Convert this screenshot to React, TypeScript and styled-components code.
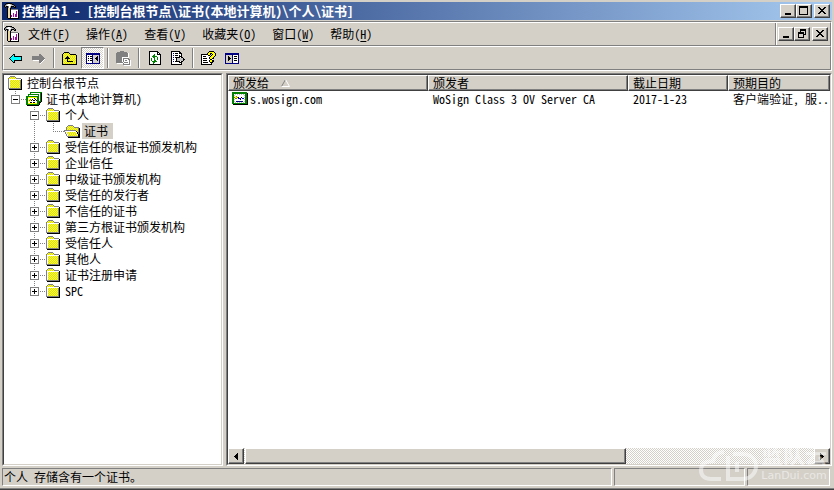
import React from "react";
import styled, { createGlobalStyle, css } from "styled-components";

const face = "#d4d0c8";
const shadow = "#808080";
const dark = "#404040";

const GlobalStyle = createGlobalStyle`
  * { box-sizing: border-box; }
  body { margin: 0; background: ${face}; }
  body, button, table {
    font-family: "Noto Sans CJK SC", "Liberation Sans", sans-serif;
    font-size: 12px;
    line-height: 16px;
    color: #000;
    font-feature-settings: "hwid";
  }
  button { margin: 0; padding: 0; border: 0; background: none; }
  svg { display: block; flex: none; }
`;

/* ---------- pixel icons ---------- */

const palette: Record<string, string> = {
  k: "#000000", w: "#ffffff", g: "#808080", l: "#c0c0c0", f: "#d4d0c8",
  y: "#ffff00", Y: "#ffff9c", d: "#d8d84c", o: "#808000", n: "#000080",
  b: "#0000ff", c: "#00ffff", e: "#008000", r: "#b000b0", t: "#e8d8a0",
};

function PixelIcon({ rows }: { rows: string[] }) {
  const width = Math.max(...rows.map((r) => r.length));
  const runs: React.ReactElement[] = [];
  rows.forEach((row, y) => {
    let x = 0;
    while (x < row.length) {
      const ch = row[x];
      let end = x + 1;
      while (end < row.length && row[end] === ch) end++;
      if (palette[ch]) {
        runs.push(<rect key={`${x}-${y}`} x={x} y={y} width={end - x} height={1} fill={palette[ch]} />);
      }
      x = end;
    }
  });
  return (
    <svg width={width} height={rows.length} viewBox={`0 0 ${width} ${rows.length}`} shapeRendering="crispEdges" aria-hidden="true">
      {runs}
    </svg>
  );
}

const folderRows = [
  "................",
  "...ggggg........",
  "..gydydyg.......",
  ".gydydydyggggg..",
  ".gwwwwwwwwwwwwk.",
  ".gwydydydydydgk.",
  ".gwdydydydydygk.",
  ".gwydydydydydgk.",
  ".gwdydydydydygk.",
  ".gwydydydydydgk.",
  ".gwdydydydydygk.",
  ".gwydydydydydgk.",
  ".gwdydydydydygk.",
  ".gggggggggggggk.",
  "..kkkkkkkkkkkkk.",
  "................",
];

const openFolderRows = [
  "................",
  "................",
  "....ggggg.......",
  "...gydydyg......",
  "..gydydydyggggg.",
  "..gdydydydydydgk",
  "..gydydydydydygk",
  "ggggggggggggydgk",
  "gwwwwwwwwwwwkygk",
  ".gwydydydydywkgk",
  ".gwdydydydydykgk",
  "..gwydydydydywkk",
  "..gwdydydydydykk",
  "...gggggggggggkk",
  "....kkkkkkkkkkkk",
  "................",
];

const certRows = [
  "................",
  "eeeeeeeeeeeeeee.",
  "eeeeeeeeeeeeeeek",
  "eewlwlwlwlwlweek",
  "eelwwwwwwwwwleek",
  "eewyowwwwwwwweek",
  "eeoyyokwwkwwleek",
  "eewoownbnwnbweek",
  "eelwwwwwnwwwleek",
  "eewwwwwwwwwwweek",
  "eelwnnnnnnnwleek",
  "eewlwlwlwlwlweek",
  "eeeeeeeeeeeeeeek",
  ".kkkkkkkkkkkkkkk",
  "................",
  "................",
];

const certStoreRows = [
  "................",
  "....eeeeeeeeeeee",
  "....ewwwwwwwwwek",
  "..eeeeeeeeeeewek",
  "..ewwwwwwwwwewek",
  "eeeeeeeeeeeeewek",
  "eeyyyyyyyyyeewek",
  "eeYwwwwwkwYeewek",
  "eewyowkwwkweewek",
  "eeyoykwkkwkeewek",
  "eewywwwwwwweeeek",
  "eeYwkkwkkwYeekk.",
  "eeyyyyyyyyyeek..",
  "eeeeeeeeeeeeek..",
  ".kkkkkkkkkkkk...",
  "................",
];

const consoleRows = [
  "..kkkkkk........",
  ".kglwwlgkk......",
  "kglwwwwllgk.....",
  "kgkkgwlkkkgk....",
  ".k.kgwgk..kk....",
  "...kttk.........",
  "...kttkggggggg..",
  "...kttkwwwwwwwk.",
  "...kttkwwwwwrwk.",
  "...kttkwwwwwrwk.",
  "...kttkwwrwwrwk.",
  "...kttkwwrwrrwk.",
  "...kttkrwrwrrwk.",
  "...kttkrwrwrrwk.",
  "...kttkwwwwwwwk.",
  "....kkkkkkkkkkk.",
];

const backRows = [
  "....kk.......",
  "...kck.......",
  "..kcckkkkkkkk",
  ".kcccccccccck",
  "kccccccccccck",
  ".kcccccccccck",
  "..kcckkkkkkkk",
  "...kck.......",
  "....kk.......",
];

const forwardRows = [
  "..............",
  ".......gg.....",
  ".......ggg....",
  "ggggggggggg...",
  "gggggggggggg..",
  "ggggggggggggg.",
  "ggggggggggggw.",
  ".wwwwwwggggw..",
  ".......gggw...",
  ".......ggw....",
  "........w.....",
];

const upRows = [
  "..kkkkk........",
  ".kydydyk.......",
  "kydydydykkkkkk.",
  "kdydydydydydydk",
  "kydydkdydydydyk",
  "kdydkkkydydydyk",
  "kydkkkkkydydydk",
  "kdydykdydydydyk",
  "kydydkydydydydk",
  "kdydykkkkkkydyk",
  "kydydydydydydyk",
  "kdydydydydydydk",
  "kkkkkkkkkkkkkkk",
];

const treePaneRows = [
  "nnnnnnnnnnnnnn",
  "nnnnnnnnnnnnnn",
  "nwwwwwnffffffn",
  "nwkwkknffffkfn",
  "nwwwwwnfffkkfn",
  "nwkwkknffkkkfn",
  "nwwwwwnfffkkfn",
  "nwkwkknffffkfn",
  "nwwwwwnffffffn",
  "nwwwwwnffffffn",
  "nnnnnnnnnnnnnn",
];

const actionPaneRows = [
  "nnnnnnnnnnnnnn",
  "nnnnnnnnnnnnnn",
  "nffffffnwwwwwn",
  "nffkfffnwkkkwn",
  "nffkkffnwwwwwn",
  "nffkkkfnwkkkwn",
  "nffkkffnwwwwwn",
  "nffkfffnwkkkwn",
  "nffffffnwwwwwn",
  "nffffffnwwwwwn",
  "nnnnnnnnnnnnnn",
];

const pasteRows = [
  "....gggg........",
  ".gggggggggg.....",
  "ggggggggggggw...",
  "ggggggggggggw...",
  "ggggggggggggw...",
  "ggggggggggggw...",
  "ggggggwwwwwww...",
  "ggggggwgggggg...",
  "ggggggwgwwwwgg..",
  "ggggggwgwggwwgw.",
  "ggggggwgwwwwwgw.",
  "gggggggwggggwgw.",
  ".wwwwwwgwwwwwgw.",
  ".......gggggggw.",
  "........wwwwwww.",
];

const refreshRows = [
  "kkkkkkkkk...",
  "kwwwwwwwkk..",
  "kwwwwwwwkwk.",
  "kwwwwewwkkkk",
  "kwwweewwwwwk",
  "kwweeeeewwwk",
  "kwwweewwewwk",
  "kwewwewwewwk",
  "kwewwewwewwk",
  "kwewweewwwwk",
  "kwweeeeewwwk",
  "kwwweewwwwwk",
  "kwwwewwwwwwk",
  "kkkkkkkkkkkk",
];

const exportRows = [
  "kkkkkkkkk.....",
  "kwwwwwwwkk....",
  "kwnwkkkwkkk...",
  "kwwwwwwwwwk...",
  "kwnwkkkwkwk...",
  "kwwwwwwwkkk...",
  "kwnwkkkkkwkk..",
  "kwwwwkllllllk.",
  "kwnwwkllllllkk",
  "kwwwwkllllllk.",
  "kwnwkkkkkwkk..",
  "kwwwwwwwkkk...",
  "kwwwwwwwwwk...",
  "kkkkkkkkkkk...",
];

const helpRows = [
  "........kkkkk..",
  ".......kyyyyyk.",
  "......kyykkyyyk",
  "kkkkkkkyyk.kyyk",
  "kwwwwwwkk.kyyyk",
  "kwkkkwwwwkyyyk.",
  "kwwwwwwwkyyyk..",
  "kwkkkkwwkyykk..",
  "kwwwwwwwwkkw...",
  "kwkkkkwwkyykk..",
  "kwwwwwwwkyykk..",
  "kwkkkkkwwkkk...",
  "kwwwwwwwwwk....",
  "kkkkkkkkkkk....",
];

const minimizeRows = ["......", "......", "......", "......", "......", "......", "kkkkkk", "kkkkkk"];
const maximizeRows = [
  "kkkkkkkkk", "kkkkkkkkk", "k.......k", "k.......k", "k.......k", "k.......k", "k.......k", "k.......k", "kkkkkkkkk",
];
const restoreRows = [
  "..kkkkkk", "..kkkkkk", "..k....k", "kkkkkk.k", "kkkkkk.k", "k....kkk", "k....k..", "k....k..", "kkkkkk..",
];
const closeRows = ["kk....kk", ".kk..kk.", "..kkkk..", "...kk...", "..kkkk..", ".kk..kk.", "kk....kk"];
const arrowLeftRows = ["...k", "..kk", ".kkk", "kkkk", ".kkk", "..kk", "...k"];
const arrowRightRows = ["k...", "kk..", "kkk.", "kkkk", "kkk.", "kk..", "k..."];

/* ---------- frame ---------- */

const raised = css`
  background: ${face};
  border: 1px solid;
  border-color: #fff ${dark} ${dark} #fff;
  box-shadow: inset -1px -1px 0 ${shadow};
`;

const Window = styled.main`
  display: flex;
  flex-direction: column;
  min-height: 100vh;
  padding: 2px;
  background: ${face};
  border-bottom: 1px solid ${dark};
  box-shadow: inset 0 -1px 0 ${shadow};
  overflow: hidden;
  white-space: nowrap;
  cursor: default;
`;

const TitleBar = styled.header`
  display: flex;
  align-items: center;
  height: 18px;
  padding: 0 2px;
  background: linear-gradient(90deg, #0a246a, #a6caf0);
`;

const Title = styled.h1`
  flex: 1;
  min-width: 0;
  margin: 0;
  padding-left: 2px;
  overflow: hidden;
  color: #fff;
  font-size: 13px;
  font-weight: 700;
  line-height: 18px;
`;

const CaptionButtons = styled.div`
  display: flex;
`;

const CaptionButton = styled.button<{ $apart?: boolean }>`
  ${raised}
  display: flex;
  align-items: center;
  justify-content: center;
  width: 16px;
  height: 14px;
  padding: 0 1px 1px 0;
  margin-left: ${(p) => (p.$apart ? "2px" : "0")};
`;

const BarFrame = styled.div`
  margin-top: 1px;
  border: 1px solid;
  border-color: ${shadow} #fff #fff ${shadow};
`;

const Bar = styled.div`
  display: flex;
  align-items: center;
  height: 24px;
  border: 1px solid;
  border-color: #fff ${shadow} ${shadow} #fff;
`;

const MenuIcon = styled.span`
  width: 22px;
`;

const Menu = styled.nav`
  display: flex;
  flex: 1;
  min-width: 0;
  gap: 16px;
  padding-left: 2px;
`;

const Key = styled.span`
  text-decoration: underline;
  text-underline-offset: 2px;
`;

const DocumentButtons = styled(CaptionButtons)`
  align-items: center;
  align-self: stretch;
  padding: 0 2px;
  border-left: 1px solid ${shadow};
  box-shadow: inset 1px 0 0 #fff;
`;

const ToolButton = styled.button<{ $pressed?: boolean }>`
  display: flex;
  align-items: center;
  justify-content: center;
  width: 23px;
  height: 22px;
  ${(p) =>
    p.$pressed &&
    css`
      border: 1px solid;
      border-color: ${shadow} #fff #fff ${shadow};
      background: repeating-conic-gradient(#fff 0 25%, ${face} 0 50%) 0 0 / 2px 2px;
    `}
`;

const ToolSeparator = styled.span`
  width: 2px;
  height: 20px;
  margin: 0 3px;
  border-left: 1px solid ${shadow};
  border-right: 1px solid #fff;
`;

const Panes = styled.div`
  display: grid;
  flex: 1;
  grid-template-columns: minmax(0, 221fr) minmax(0, 606fr);
  gap: 3px;
  margin-top: 2px;
`;

const Pane = styled.section`
  display: flex;
  flex-direction: column;
  min-width: 0;
  background: #fff;
  border: 1px solid;
  border-color: ${shadow} #fff #fff ${shadow};
  overflow: hidden;
`;

const PaneInner = styled.div`
  display: flex;
  flex: 1;
  flex-direction: column;
  min-width: 0;
  border: 1px solid;
  border-color: ${dark} ${face} ${face} ${dark};
`;

/* ---------- tree ---------- */

const TreeList = styled.ul`
  margin: 0;
  padding: 0 0 0 3px;
  list-style: none;
`;

const TreeRow = styled.li`
  display: flex;
  height: 16px;
`;

const Gutter = styled.span`
  display: flex;
  width: 19px;
  height: 16px;
`;

const Expander = styled.button`
  width: 19px;
  height: 16px;
`;

const TreeLabel = styled.span<{ $selected?: boolean }>`
  margin-left: 2px;
  padding: 0 5px 0 2px;
  background: ${(p) => (p.$selected ? face : "transparent")};
`;

type Cell = "blank" | "line" | "end" | "plus" | "plusEnd" | "minus" | "minusEnd";

function Connector({ cell }: { cell: Cell }) {
  const box = cell.startsWith("plus") || cell.startsWith("minus");
  const ends = cell.toLowerCase().endsWith("end");
  return (
    <svg width="19" height="16" viewBox="0 0 19 16" shapeRendering="crispEdges" aria-hidden="true">
      {cell !== "blank" && (
        <path d={ends ? "M8.5 0V9" : "M8.5 0V16"} stroke={shadow} strokeDasharray="1 1" />
      )}
      {cell !== "line" && cell !== "blank" && <path d="M8 8.5H19" stroke={shadow} strokeDasharray="1 1" />}
      {box && <rect x="4.5" y="4.5" width="8" height="8" fill="#fff" stroke={shadow} />}
      {box && <path d="M6 8.5H11" stroke="#000" />}
      {cell.startsWith("plus") && <path d="M8.5 6V11" stroke="#000" />}
    </svg>
  );
}

interface TreeItem {
  label: string;
  cells: Cell[];
  icon: string[];
  selected?: boolean;
}

const tree: TreeItem[] = [
  { label: "控制台根节点", cells: [], icon: folderRows },
  { label: "证书(本地计算机)", cells: ["minusEnd"], icon: certStoreRows },
  { label: "个人", cells: ["blank", "minus"], icon: folderRows },
  { label: "证书", cells: ["blank", "line", "end"], icon: openFolderRows, selected: true },
  ...["受信任的根证书颁发机构", "企业信任", "中级证书颁发机构", "受信任的发行者", "不信任的证书", "第三方根证书颁发机构", "受信任人", "其他人", "证书注册申请"].map(
    (label): TreeItem => ({ label, cells: ["blank", "plus"], icon: folderRows }),
  ),
  { label: "SPC", cells: ["blank", "plusEnd"], icon: folderRows },
];

/* ---------- list ---------- */

const CertTable = styled.table`
  width: 100%;
  table-layout: fixed;
  border-collapse: separate;
  border-spacing: 0;
`;

const Column = styled.col<{ $width?: number }>`
  width: ${(p) => (p.$width ? `${p.$width}px` : "auto")};
`;

const HeadCell = styled.th`
  ${raised}
  height: 16px;
  padding: 0;
  font-weight: 400;
`;

const HeadButton = styled.button`
  display: flex;
  align-items: center;
  gap: 12px;
  width: 100%;
  height: 14px;
  padding-left: 4px;
  line-height: 14px;
`;

const BodyCell = styled.td<{ $icon?: boolean }>`
  padding: 0 0 0 ${(p) => (p.$icon ? "4px" : "5px")};
`;

const Named = styled.span`
  display: flex;
  gap: 2px;
`;

const ScrollBar = styled.div`
  display: flex;
  height: 16px;
  margin-top: auto;
  background: repeating-conic-gradient(#fff 0 25%, ${face} 0 50%) 0 0 / 2px 2px;
`;

const ScrollButton = styled.button`
  ${raised}
  display: flex;
  align-items: center;
  justify-content: center;
  width: 16px;
  height: 16px;
`;

const ScrollTrack = styled.div`
  flex: 1;
  padding-left: 1px;
`;

const ScrollThumb = styled.div`
  ${raised}
  width: 67%;
  height: 16px;
`;

/* ---------- status bar ---------- */

const StatusBar = styled.footer`
  display: grid;
  grid-template-columns: minmax(0, 1fr) 131px 83px;
  gap: 2px;
  height: 18px;
  margin: 2px 2px 1px 0;
`;

const StatusCell = styled.div`
  padding-left: 1px;
  border: 1px solid;
  border-color: ${shadow} #fff #fff ${shadow};
`;

const Watermark = styled.div`
  position: absolute;
  right: 7px;
  bottom: 8px;
  display: flex;
  align-items: flex-end;
  gap: 2px;
  color: #fff;
  opacity: 0.5;
  pointer-events: none;
`;

const WatermarkText = styled.div`
  display: flex;
  flex-direction: column;
  align-items: center;
  font-family: "Liberation Sans", "Noto Sans CJK SC", sans-serif;
`;

const WatermarkName = styled.span`
  font-size: 22px;
  font-weight: 700;
  line-height: 26px;
`;

const WatermarkSite = styled.span`
  font-family: "DejaVu Sans", sans-serif;
  font-size: 11px;
  line-height: 13px;
`;

const menus: [string, string][] = [
  ["文件", "F"], ["操作", "A"], ["查看", "V"], ["收藏夹", "O"], ["窗口", "W"], ["帮助", "H"],
];

const tools: ({ name: string; icon: string[]; pressed?: boolean; disabled?: boolean } | null)[] = [
  { name: "后退", icon: backRows },
  { name: "前进", icon: forwardRows, disabled: true },
  null,
  { name: "上一级", icon: upRows },
  { name: "显示/隐藏控制台树", icon: treePaneRows, pressed: true },
  null,
  { name: "粘贴", icon: pasteRows, disabled: true },
  null,
  { name: "刷新", icon: refreshRows },
  { name: "导出列表", icon: exportRows },
  null,
  { name: "帮助", icon: helpRows },
  { name: "显示/隐藏操作窗格", icon: actionPaneRows },
];

export default function App() {
  return (
    <>
      <GlobalStyle />
      <Window>
        <TitleBar>
          <PixelIcon rows={consoleRows} />
          <Title>控制台1 - [控制台根节点\证书(本地计算机)\个人\证书]</Title>
          <CaptionButtons>
            <CaptionButton aria-label="最小化"><PixelIcon rows={minimizeRows} /></CaptionButton>
            <CaptionButton aria-label="最大化"><PixelIcon rows={maximizeRows} /></CaptionButton>
            <CaptionButton aria-label="关闭" $apart><PixelIcon rows={closeRows} /></CaptionButton>
          </CaptionButtons>
        </TitleBar>

        <BarFrame>
          <Bar>
            <MenuIcon><PixelIcon rows={consoleRows} /></MenuIcon>
            <Menu>
              {menus.map(([label, key]) => (
                <button key={key}>{label}(<Key>{key}</Key>)</button>
              ))}
            </Menu>
            <DocumentButtons>
              <CaptionButton aria-label="最小化文档"><PixelIcon rows={minimizeRows} /></CaptionButton>
              <CaptionButton aria-label="还原文档"><PixelIcon rows={restoreRows} /></CaptionButton>
              <CaptionButton aria-label="关闭文档" $apart><PixelIcon rows={closeRows} /></CaptionButton>
            </DocumentButtons>
          </Bar>
          <Bar role="toolbar">
            {tools.map((tool, i) =>
              tool ? (
                <ToolButton key={i} aria-label={tool.name} $pressed={tool.pressed} disabled={tool.disabled}>
                  <PixelIcon rows={tool.icon} />
                </ToolButton>
              ) : (
                <ToolSeparator key={i} />
              ),
            )}
          </Bar>
        </BarFrame>

        <Panes>
          <Pane>
            <PaneInner>
              <TreeList role="tree">
                {tree.map((item) => (
                  <TreeRow key={`${item.label}-${item.cells.length}`} role="treeitem" aria-level={item.cells.length + 1} aria-selected={!!item.selected}>
                    {item.cells.map((cell, i) =>
                      cell.startsWith("plus") || cell.startsWith("minus") ? (
                        <Expander key={i} aria-label={cell.startsWith("plus") ? "展开" : "折叠"}>
                          <Connector cell={cell} />
                        </Expander>
                      ) : (
                        <Gutter key={i}><Connector cell={cell} /></Gutter>
                      ),
                    )}
                    <PixelIcon rows={item.icon} />
                    <TreeLabel $selected={item.selected}>{item.label}</TreeLabel>
                  </TreeRow>
                ))}
              </TreeList>
            </PaneInner>
          </Pane>

          <Pane>
            <PaneInner>
              <CertTable>
                <colgroup>
                  <Column $width={200} />
                  <Column $width={200} />
                  <Column $width={100} />
                  <Column />
                </colgroup>
                <thead>
                  <tr>
                    <HeadCell>
                      <HeadButton>
                        颁发给
                        <svg width="9" height="8" viewBox="0 0 9 8" aria-hidden="true">
                          <path d="M4.5 0.5L0.5 7.5" stroke={shadow} fill="none" />
                          <path d="M4.5 0.5L8.5 7.5H0.5" stroke="#fff" fill="none" />
                        </svg>
                      </HeadButton>
                    </HeadCell>
                    <HeadCell><HeadButton>颁发者</HeadButton></HeadCell>
                    <HeadCell><HeadButton>截止日期</HeadButton></HeadCell>
                    <HeadCell><HeadButton>预期目的</HeadButton></HeadCell>
                  </tr>
                </thead>
                <tbody>
                  <tr>
                    <BodyCell $icon>
                      <Named><PixelIcon rows={certRows} />s.wosign.com</Named>
                    </BodyCell>
                    <BodyCell>WoSign Class 3 OV Server CA</BodyCell>
                    <BodyCell>2017-1-23</BodyCell>
                    <BodyCell>客户端验证, 服..</BodyCell>
                  </tr>
                </tbody>
              </CertTable>
              <ScrollBar>
                <ScrollButton aria-label="向左滚动"><PixelIcon rows={arrowLeftRows} /></ScrollButton>
                <ScrollTrack><ScrollThumb /></ScrollTrack>
                <ScrollButton aria-label="向右滚动"><PixelIcon rows={arrowRightRows} /></ScrollButton>
              </ScrollBar>
            </PaneInner>
          </Pane>
        </Panes>

        <StatusBar>
          <StatusCell>个人 存储含有一个证书。</StatusCell>
          <StatusCell />
          <StatusCell />
        </StatusBar>

        <Watermark>
          <svg width="60" height="32" viewBox="0 0 60 32" fill="none" stroke="#fff" strokeWidth="4" aria-hidden="true">
            <path d="M25 2C18 2 15 6 14 11C7 11 2 14 2 20C2 26 6 29 12 29H22" />
            <path d="M29 6V29H43C52 29 57 23 57 16C57 9 52 4 43 4H34" />
            <path d="M38 12V22" />
          </svg>
          <WatermarkText>
            <WatermarkName>蓝队云</WatermarkName>
            <WatermarkSite>LanDui.com</WatermarkSite>
          </WatermarkText>
        </Watermark>
      </Window>
    </>
  );
}
